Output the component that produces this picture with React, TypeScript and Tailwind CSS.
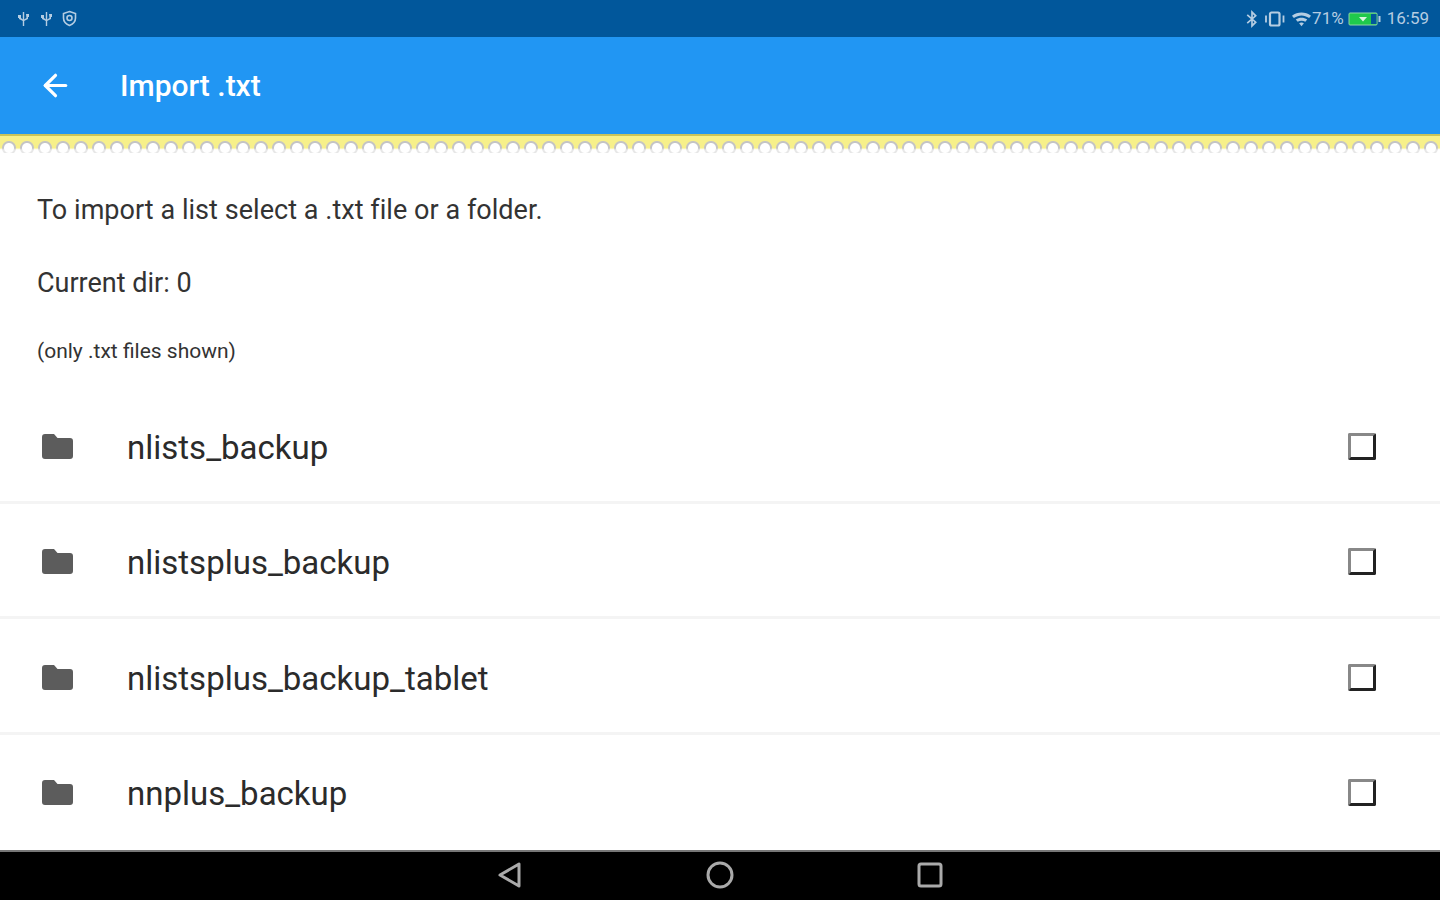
import { ArrowLeft } from 'lucide-react'

const folders = ['nlists_backup', 'nlistsplus_backup', 'nlistsplus_backup_tablet', 'nnplus_backup']

function StatusBar() {
  return (
    <div className="flex h-[37px] items-center justify-between bg-[#01579b] pl-[17px] pr-[11px] text-[#b5cde2]">
      <div className="flex items-center gap-[10px]">
        {[0, 1].map((i) => (
          <svg key={i} width="13" height="16" viewBox="0 0 13 16" fill="currentColor">
            <path d="M5.800 1h1.400v14H5.800z" />
            <path d="M1 4h3v3l2 1.500V10L2 8V7H1zM9 3h3v3h-1v2L7 10V8.500l2.500-1.500z" />
          </svg>
        ))}
        <svg className="-ml-[1px]" width="15" height="17" viewBox="0 0 15 17" fill="none" stroke="currentColor" strokeWidth="1.600">
          <path d="M7.500 1.500 13.500 3.500V8c0 3.500-2.500 6-6 7.500C4 14 1.500 11.500 1.500 8V3.500z" />
          <circle cx="7.500" cy="8" r="2.500" />
        </svg>
      </div>
      <div className="flex items-center font-['Roboto',sans-serif] text-[17px]">
        <svg width="12" height="18" viewBox="0 0 11 17" fill="none" stroke="currentColor" strokeWidth="1.600">
          <path d="M1 4.500 9 11.500 5.500 15V2L9 5.500 1 12.500" />
        </svg>
        <svg className="ml-[7px]" width="20" height="18" viewBox="0 0 20 17" fill="none" stroke="currentColor" strokeWidth="1.800">
          <path d="M1 5v7M18.500 5v7" />
          <rect x="5" y="2" width="9.500" height="13" rx="1.500" strokeWidth="2.200" />
        </svg>
        <svg className="ml-[6px]" width="21" height="16" viewBox="0 0 22 16" fill="currentColor">
          <path d="M1 4.500C7 0 15 0 21 4.500l-2 2.500C13.500 3.500 8.500 3.500 3 7z" />
          <path d="M5 8.500c3.500-2.500 8.500-2.500 12 0l-2 2.500c-2.500-1.700-5.500-1.700-8 0z" />
          <path d="M8.500 12.500c1.500-1 3.500-1 5 0L11 15.500z" />
        </svg>
        <span>71%</span>
        <svg className="ml-[4px]" width="33" height="14" viewBox="0 0 33 14">
          <rect x="1" y="1" width="28" height="12" rx="1" fill="#1fc94b" stroke="#8fd6a5" />
          <rect x="23" y="2" width="5.500" height="10" fill="#01579b" />
          <rect x="30.500" y="4" width="2" height="6" fill="currentColor" />
          <path d="M11 5h8l-4 4.500z" fill="#d9f7df" />
        </svg>
        <span className="ml-[6px]">16:59</span>
      </div>
    </div>
  )
}

function FolderRow({ name, last }: { name: string; last: boolean }) {
  return (
    <div className={`flex h-[115.5px] shrink-0 items-center border-b-[3px] pl-[42px] pr-[64px] pt-[4px] ${last ? 'border-transparent' : 'border-[#f4f4f4]'}`}>
      <svg className="shrink-0" width="31" height="25" viewBox="0 0 31 25" fill="#5c5c5c">
        <path d="M3 0h9l3.500 4H28a3 3 0 0 1 3 3v15a3 3 0 0 1-3 3H3a3 3 0 0 1-3-3V3a3 3 0 0 1 3-3z" />
      </svg>
      <span className="ml-[54px] flex-1 pt-[2px] text-[33px] leading-none text-[#2b2b2b]">{name}</span>
      <div className="h-[27px] w-[28px] rounded-[2px] border-[3px] border-b-[#222222] border-l-[#888888] border-r-[#222222] border-t-[#888888]" />
    </div>
  )
}

export default function App() {
  return (
    <div className="flex h-[900px] w-[1440px] flex-col overflow-hidden bg-white font-['Roboto','Liberation_Sans',sans-serif]">
      <StatusBar />
      <header className="flex h-[97px] shrink-0 items-center bg-[#2196f3] pl-[38px] text-white">
        <ArrowLeft size={35} strokeWidth={2.2} />
        <h1 className="ml-[47px] text-[30px] font-medium leading-none">Import .txt</h1>
      </header>
      {/* scalloped strip under the toolbar */}
      <div className="h-[19px] shrink-0 border-t-[2px] border-[#c9c45a] bg-[linear-gradient(rgba(255,255,255,0)_0,rgba(255,255,255,0)_12px,rgba(255,255,255,0.6)_14px),radial-gradient(circle_at_9px_12px,#ffffff_0,#ffffff_4.500px,#c4c4c4_5.500px,#c4c4c4_6.500px,rgba(196,196,196,0)_7.500px),linear-gradient(#f7f08a_0,#f7f08a_12px,#ffffff_14px)] bg-[length:100%_100%,18px_18px,100%_100%] bg-[repeat:no-repeat,repeat-x,no-repeat]" />
      <div className="flex min-h-0 flex-1 flex-col overflow-hidden">
        <div className="flex flex-col px-[37px] pt-[37px] text-[#333333]">
          <p className="text-[27px] leading-[40px] tracking-[0.04px]">To import a list select a .txt file or a folder.</p>
          <p className="mt-[33px] text-[27px] leading-[40px]">Current dir: 0</p>
          <p className="mt-[34px] text-[21px] leading-[28px]">(only .txt files shown)</p>
        </div>
        <div className="mt-[23px] flex flex-col">
          {folders.map((f, i) => (
            <FolderRow key={f} name={f} last={i === folders.length - 1} />
          ))}
        </div>
      </div>
      <nav className="flex h-[50px] shrink-0 items-center justify-center gap-[183px] border-t-[2px] border-[#777777] bg-black pb-[2px] text-[#aaaaaa]">
        <svg width="26" height="28" viewBox="0 0 26 28" fill="none" stroke="currentColor" strokeWidth="3" strokeLinejoin="round">
          <path d="M22 3v22L3 14z" />
        </svg>
        <svg width="28" height="28" viewBox="0 0 28 28" fill="none" stroke="currentColor" strokeWidth="3">
          <circle cx="14" cy="14" r="12" />
        </svg>
        <svg width="26" height="26" viewBox="0 0 26 26" fill="none" stroke="currentColor" strokeWidth="3">
          <rect x="2" y="2" width="22" height="22" rx="2" />
        </svg>
      </nav>
    </div>
  )
}
